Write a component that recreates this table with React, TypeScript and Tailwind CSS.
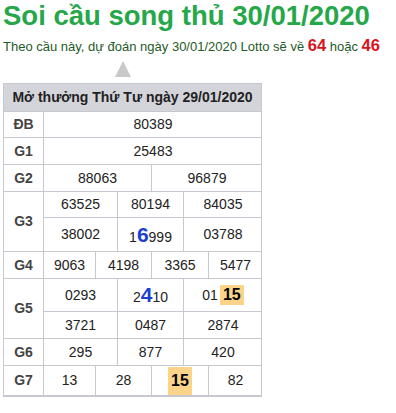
import React from "react";

const B = "border-[#c6c7cf]";

function Cell({ w, children, last }: { w: string; children: React.ReactNode; last?: boolean }) {
  return (
    <div className={`${w} flex items-center justify-center ${last ? "" : `border-r ${B}`}`}>
      {children}
    </div>
  );
}

function Row({
  label,
  sub,
  last,
}: {
  label: string;
  sub: { h: string; cells: { w: string; c: React.ReactNode }[] }[];
  last?: boolean;
}) {
  return (
    <div className={`flex ${last ? "" : `border-b ${B}`}`}>
      <div className={`w-[40px] shrink-0 border-r ${B} flex items-center justify-center font-bold text-[14px] text-[#444]`}>
        {label}
      </div>
      <div className="flex flex-col flex-1">
        {sub.map((s, i) => (
          <div key={i} className={`flex ${s.h} ${i < sub.length - 1 ? `border-b ${B}` : ""}`}>
            {s.cells.map((c, j) => (
              <Cell key={j} w={c.w} last={j === s.cells.length - 1}>
                {c.c}
              </Cell>
            ))}
          </div>
        ))}
      </div>
    </div>
  );
}

const Big = ({ children }: { children: React.ReactNode }) => (
  <span className="text-[21px] font-bold text-[#1b3fd4]">{children}</span>
);
const Hl = ({ children }: { children: React.ReactNode }) => (
  <span className="bg-[#fbd48a] font-bold text-[16px] text-black px-[3px] py-[1px] leading-[18px]">{children}</span>
);

export default function App() {
  return (
    <div className="w-[396px] h-[413px] bg-white pl-[3px]" style={{ fontFamily: '"Liberation Sans", Arial, sans-serif' }}>
      <div className="text-[27.5px] leading-[32px] font-bold text-[#25a74a]">Soi cầu song thủ 30/01/2020</div>
      <div className="mt-[3px] text-[13px] leading-[20px] text-[#1f5a27] whitespace-nowrap">
        Theo cầu này, dự đoán ngày 30/01/2020 Lotto sẽ về{" "}
        <span className="text-[16.5px] font-bold text-[#d8151d]">64</span> hoặc{" "}
        <span className="text-[16.5px] font-bold text-[#d8151d]">46</span>
      </div>
      <div className="h-[26px] flex items-start pl-[112px] pt-[4px]">
        <svg width="16" height="16" viewBox="0 0 16 16">
          <polygon points="8,0 16,16 0,16" fill="#c9c9c9" />
        </svg>
      </div>
      <div className={`w-[259px] border border-b-2 ${B} text-[14px] text-[#222]`}>
        <div className={`h-[28px] bg-[#d4d5db] border-b ${B} flex items-center justify-center font-bold text-[14px] text-[#222]`}>
          Mở thưởng Thứ Tư ngày 29/01/2020
        </div>
        <Row label="ĐB" sub={[{ h: "h-[25px]", cells: [{ w: "w-[218px]", c: "80389" }] }]} />
        <Row label="G1" sub={[{ h: "h-[26px]", cells: [{ w: "w-[218px]", c: "25483" }] }]} />
        <Row
          label="G2"
          sub={[
            {
              h: "h-[26px]",
              cells: [
                { w: "w-[108px]", c: "88063" },
                { w: "w-[110px]", c: "96879" },
              ],
            },
          ]}
        />
        <Row
          label="G3"
          sub={[
            {
              h: "h-[26px]",
              cells: [
                { w: "w-[74px]", c: "63525" },
                { w: "w-[66px]", c: "80194" },
                { w: "w-[78px]", c: "84035" },
              ],
            },
            {
              h: "h-[33px]",
              cells: [
                { w: "w-[74px]", c: "38002" },
                {
                  w: "w-[66px]",
                  c: (
                    <span className="leading-[24px] pt-[2px]">
                      1<Big>6</Big>999
                    </span>
                  ),
                },
                { w: "w-[78px]", c: "03788" },
              ],
            },
          ]}
        />
        <Row
          label="G4"
          sub={[
            {
              h: "h-[26px]",
              cells: [
                { w: "w-[52px]", c: "9063" },
                { w: "w-[56px]", c: "4198" },
                { w: "w-[57px]", c: "3365" },
                { w: "w-[53px]", c: "5477" },
              ],
            },
          ]}
        />
        <Row
          label="G5"
          sub={[
            {
              h: "h-[33px]",
              cells: [
                { w: "w-[74px]", c: "0293" },
                {
                  w: "w-[66px]",
                  c: (
                    <span className="leading-[24px] pt-[2px]">
                      2<Big>4</Big>10
                    </span>
                  ),
                },
                {
                  w: "w-[78px]",
                  c: (
                    <span className="flex items-center gap-[2px]">
                      <span>01</span>
                      <Hl>15</Hl>
                    </span>
                  ),
                },
              ],
            },
            {
              h: "h-[26px]",
              cells: [
                { w: "w-[74px]", c: "3721" },
                { w: "w-[66px]", c: "0487" },
                { w: "w-[78px]", c: "2874" },
              ],
            },
          ]}
        />
        <Row
          label="G6"
          sub={[
            {
              h: "h-[26px]",
              cells: [
                { w: "w-[74px]", c: "295" },
                { w: "w-[66px]", c: "877" },
                { w: "w-[78px]", c: "420" },
              ],
            },
          ]}
        />
        <Row
          last
          label="G7"
          sub={[
            {
              h: "h-[29px]",
              cells: [
                { w: "w-[52px]", c: "13" },
                { w: "w-[56px]", c: "28" },
                { w: "w-[57px]", c: <span className="bg-[#fbd48a] font-bold text-[16px] text-black px-[3px] py-[2px]">15</span> },
                { w: "w-[53px]", c: "82" },
              ],
            },
          ]}
        />
      </div>
    </div>
  );
}
